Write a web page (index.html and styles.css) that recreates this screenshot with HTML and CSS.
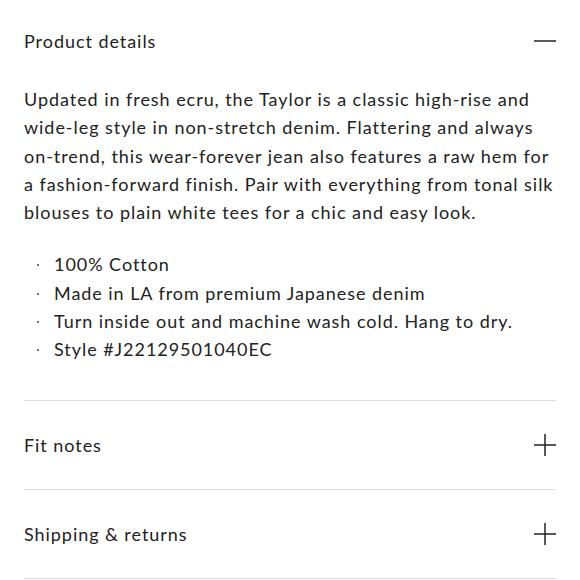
FILE: index.html
```html
<!DOCTYPE html>
<html>
<head>
<meta charset="utf-8">
<link rel="stylesheet" href="styles.css">
</head>
<body>
<div class="accordion">
  <section class="item open">
    <div class="head">
      <span class="title">Product details</span>
      <svg class="icon" width="22" height="22" viewBox="0 0 22 22"><line x1="0" y1="11" x2="22" y2="11" stroke="#222" stroke-width="1.5"/></svg>
    </div>
    <div class="body">
      <p class="desc">Updated in fresh ecru, the Taylor is a classic high-rise and wide-leg style in non-stretch denim. Flattering and always on-trend, this wear-forever jean also features a raw hem for a fashion-forward finish. Pair with everything from tonal silk blouses to plain white tees for a chic and easy look.</p>
      <ul class="list">
        <li>100% Cotton</li>
        <li>Made in LA from premium Japanese denim</li>
        <li>Turn inside out and machine wash cold. Hang to dry.</li>
        <li>Style #J22129501040EC</li>
      </ul>
    </div>
  </section>
  <section class="item">
    <div class="head">
      <span class="title">Fit notes</span>
      <svg class="icon" width="22" height="22" viewBox="0 0 22 22"><line x1="0" y1="11" x2="22" y2="11" stroke="#222" stroke-width="1.5"/><line x1="11" y1="0" x2="11" y2="22" stroke="#222" stroke-width="1.5"/></svg>
    </div>
  </section>
  <section class="item">
    <div class="head">
      <span class="title">Shipping &amp; returns</span>
      <svg class="icon" width="22" height="22" viewBox="0 0 22 22"><line x1="0" y1="11" x2="22" y2="11" stroke="#222" stroke-width="1.5"/><line x1="11" y1="0" x2="11" y2="22" stroke="#222" stroke-width="1.5"/></svg>
    </div>
  </section>
</div>
</body>
</html>
```
FILE: styles.css
```css
html, body {
  margin: 0;
  padding: 0;
  background: #fff;
}
body {
  font-family: Lato, "Liberation Sans", sans-serif;
  color: #222;
  font-size: 18px;
  letter-spacing: 0.95px;
}
.accordion {
  padding: 0 24px;
}
.item {
  border-bottom: 1px solid #dcdcdc;
}
.head {
  display: flex;
  align-items: center;
  justify-content: space-between;
  box-sizing: border-box;
  height: 88px;
}
.item.open .head {
  height: 85px;
  padding-bottom: 3px;
}
.title {
  font-size: 18px;
  line-height: 22px;
}
.body {
  padding-bottom: 36px;
}
.desc {
  margin: 0;
  line-height: 28.3px;
}
.list {
  list-style: none;
  margin: 24px 0 0;
  padding: 0;
  line-height: 28.3px;
}
.list li {
  position: relative;
  padding-left: 30px;
}
.list li::before {
  content: "";
  position: absolute;
  left: 13px;
  top: 14px;
  width: 2px;
  height: 2px;
  background: #444;
  border-radius: 50%;
}
```
